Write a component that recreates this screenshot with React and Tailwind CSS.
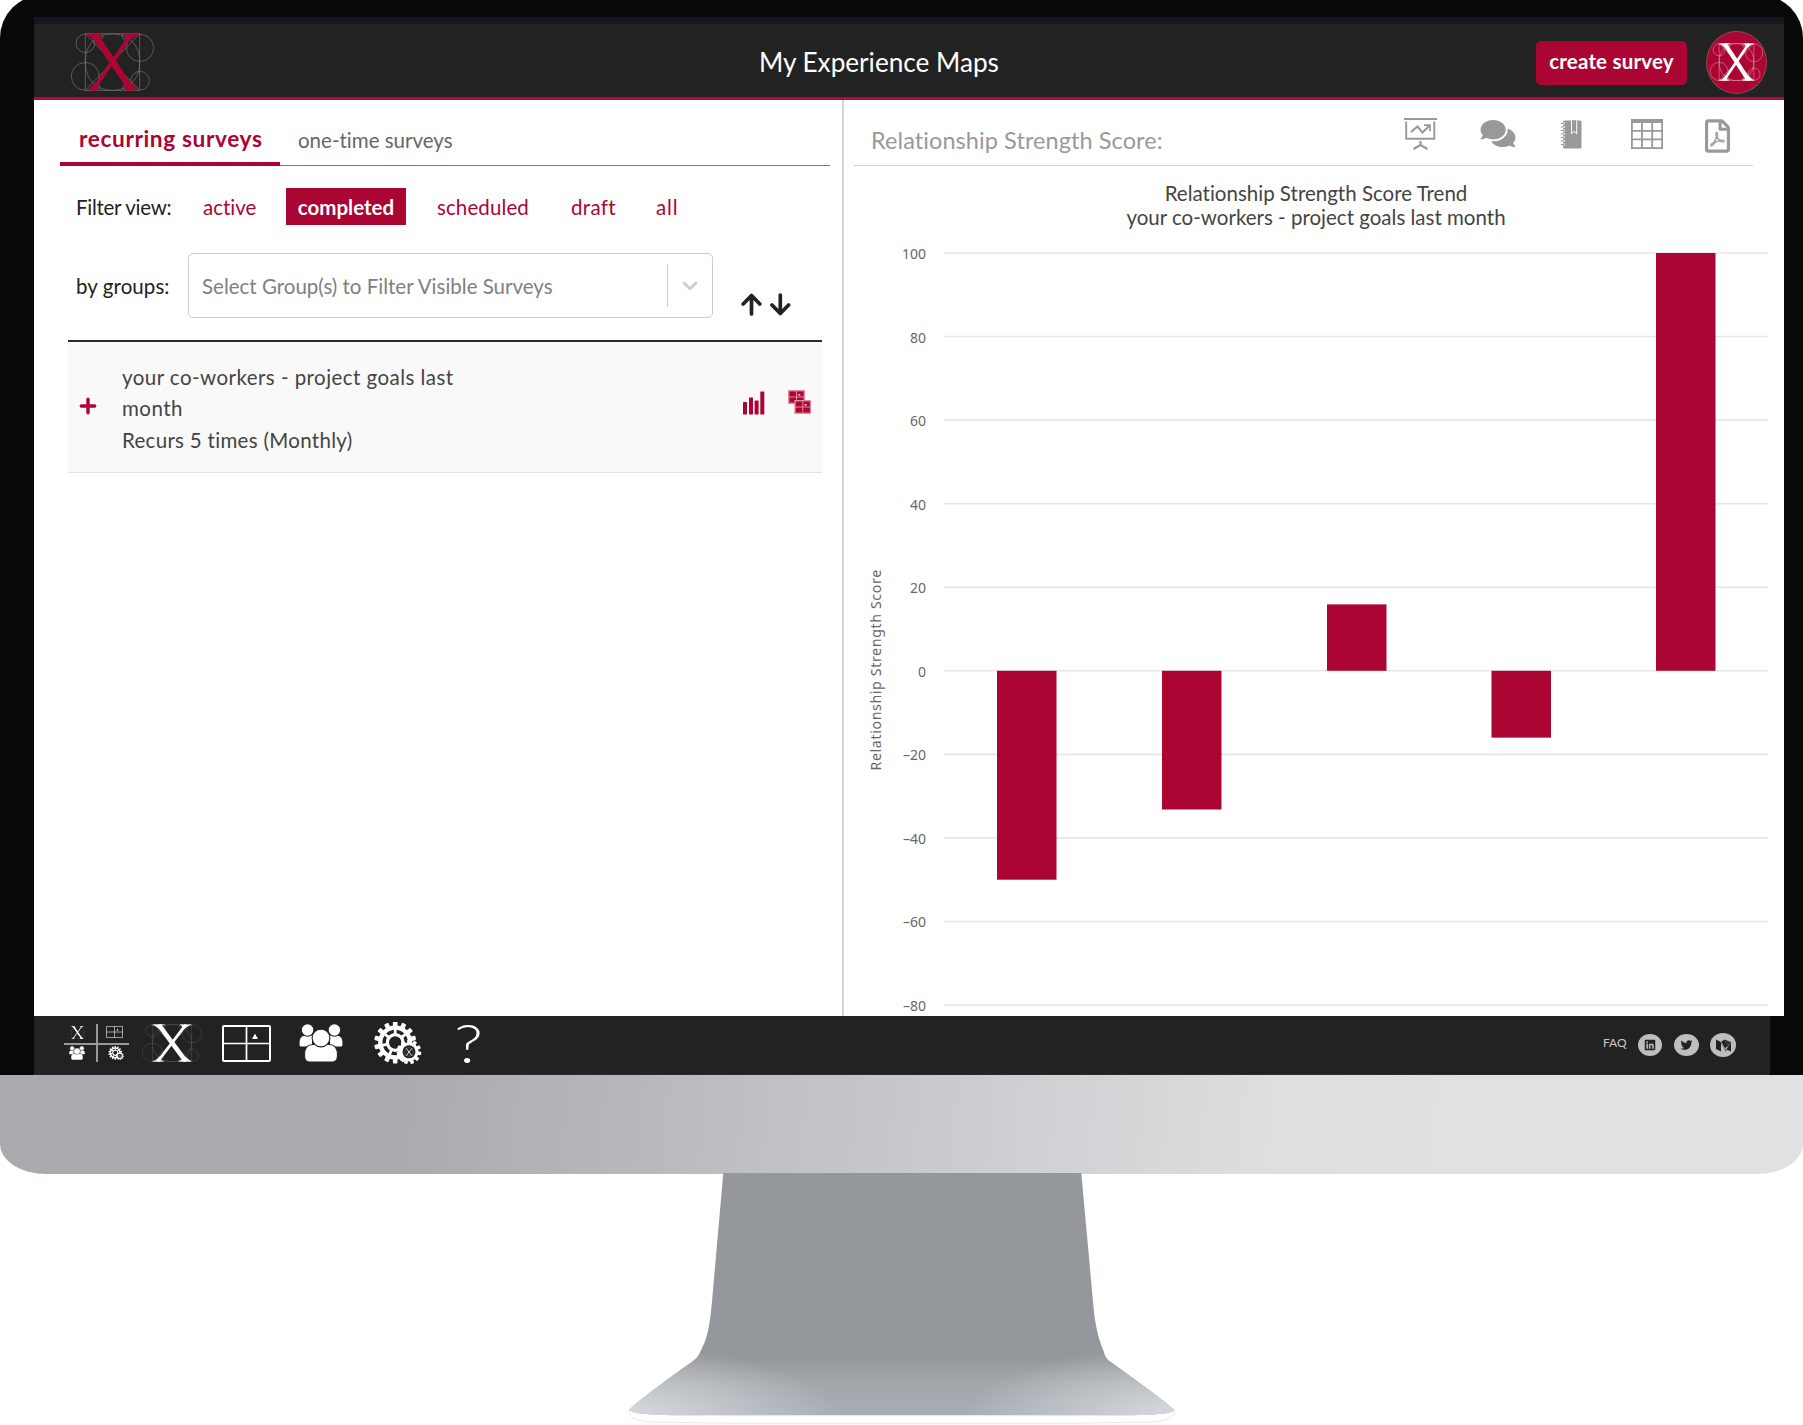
import React from "react";
import { FaComments, FaTwitter, FaLinkedin, FaRegFilePdf } from "react-icons/fa";

/* Constructed brand mark: guide circles, frame and two crossing strokes */
function XLogo({ className, guide = "#8a8a8a", fill = "#ffffff", line = 2 }) {
  return (
    <svg className={className} viewBox="34 38 249 175" preserveAspectRatio="none">
      <g fill="none" stroke={guide} strokeWidth={line}>
        <circle cx="77" cy="69" r="28" />
        <circle cx="241" cy="83" r="41" />
        <circle cx="77" cy="169" r="42" />
        <circle cx="241" cy="182" r="28" />
        <path d="M77 40H240V211H77Z" />
        <path d="M158 41C205 41 240 70 240 126C240 180 205 211 158 211C112 211 77 180 77 126C77 70 112 41 158 41Z" />
        <path d="M77 40L240 211M240 40L77 211" />
        <circle cx="122" cy="49" r="8" />
        <circle cx="195" cy="49" r="8" />
        <circle cx="112" cy="202" r="8" />
        <circle cx="198" cy="202" r="8" />
      </g>
      <g stroke={fill} fill="none">
        <path d="M103 41L216 210" strokeWidth="20" />
        <path d="M216 41L100 210" strokeWidth="12" />
        <path d="M79 42H128M192 42H238M79 209H124M186 209H238" strokeWidth="4" />
      </g>
      <g fill={fill}>
        <path d="M82 42H104V60Z" />
        <path d="M196 43H232L208 62Z" />
        <path d="M86 209L108 186L116 209Z" />
        <path d="M190 209L206 196L216 190L236 210Z" />
      </g>
    </svg>
  );
}

function GridMap({ className }) {
  return (
    <svg className={className} viewBox="0 0 49 37" fill="none" stroke="#fff" preserveAspectRatio="none">
      <rect x="1" y="1" width="47" height="35" rx="1" strokeWidth="2" />
      <path d="M24.5 1V36M1 18.5H48" strokeWidth="1.7" />
      <path d="M30.500 14V12.300L32 11V9.500H34V11L35.500 12.300V14Z" fill="#fff" stroke="none" />
    </svg>
  );
}

function People({ className }) {
  return (
    <svg className={className} viewBox="0 0 44 38" fill="#fff" stroke="#222" strokeWidth="1.1">
      <path d="M.6 18.500C.6 14 3 11.500 7 11.500H13V22.500H1.800C.8 22.500.6 21.500.6 20.500Z" stroke="none" />
      <path d="M43.400 18.500C43.400 14 41 11.500 37 11.500H31V22.500H42.200C43.200 22.500 43.400 21.500 43.400 20.500Z" stroke="none" />
      <circle cx="8.600" cy="6" r="6.300" />
      <circle cx="35.400" cy="6" r="6.300" />
      <path d="M5.500 31C5.500 24 8 20.500 14 20.500H30C36 20.500 38.500 24 38.500 31C38.500 36 37 38 33.500 38H10.500C7 38 5.500 36 5.500 31Z" />
      <circle cx="22" cy="14" r="8.900" />
    </svg>
  );
}

const toothAngles = (n) => Array.from({ length: n }, (_, i) => (360 / n) * i);

function Gears({ className }) {
  return (
    <svg className={className} viewBox="0 0 49 42">
      <g fill="#fff">
        {toothAngles(14).map((a) => (
          <rect key={a} x="19.900" y="-.5" width="4.600" height="6" rx="1" transform={`rotate(${a} 22.200 20.500)`} />
        ))}
      </g>
      <circle cx="22.200" cy="20.500" r="14.900" fill="none" stroke="#fff" strokeWidth="4.400" />
      <circle cx="22.200" cy="20.500" r="7.800" fill="none" stroke="#fff" strokeWidth="3.200" />
      <g stroke="#fff" strokeWidth="2.800">
        {toothAngles(7).map((a) => (
          <path key={a} d="M22.200 13V6" transform={`rotate(${a} 22.200 20.500)`} />
        ))}
      </g>
      <g fill="#fff">
        {toothAngles(11).map((a) => (
          <rect key={a} x="34.200" y="17.500" width="3.600" height="5" rx=".8" transform={`rotate(${a} 36 29.800)`} />
        ))}
        <circle cx="36" cy="29.800" r="9.600" />
      </g>
      <circle cx="36" cy="29.800" r="6.500" fill="#222" />
      <path d="M33 26L39 34M39 26L33 34" stroke="#ddd" strokeWidth="1" />
      <circle cx="36" cy="29.800" r="4.300" fill="none" stroke="#777" strokeWidth=".5" />
    </svg>
  );
}

function Presentation() {
  return (
    <svg className="mt-[3px] h-[32px] w-[33px]" viewBox="0 0 33 32" fill="none" stroke="#999">
      <path d="M0 1H33" strokeWidth="2" />
      <path d="M2.200 3.500V20.800H30.300V3.500" strokeWidth="1.900" />
      <path d="M7 14L13.500 8.500L18.500 14.500L25 8" strokeWidth="2" />
      <path d="M20 7.200H26V13.200" strokeWidth="1.700" />
      <path d="M16.500 23V27M9.500 31L16.500 27L23.500 31" strokeWidth="2.200" />
    </svg>
  );
}

function Notebook() {
  return (
    <svg className="h-[29px] w-[22px]" viewBox="0 0 22 29">
      <rect x="3" y=".5" width="18.500" height="28" rx="1.500" fill="#999" />
      <path d="M11.500 .5V13.800L14.100 11.300L16.700 13.800V.5" fill="#999" stroke="#fff" strokeWidth="1" />
      {[3.5, 7, 10.5, 14, 17.5, 21, 24.5].map((y) => (
        <g key={y}>
          <path d={`M2.500 ${y}H4.200`} stroke="#fff" strokeWidth="2" strokeLinecap="round" />
          <path d={`M1.300 ${y}H4`} stroke="#999" strokeWidth="1.200" strokeLinecap="round" />
        </g>
      ))}
    </svg>
  );
}

function TableIcon() {
  return (
    <svg className="h-[30px] w-[32px]" viewBox="0 0 32 30" fill="none" stroke="#999">
      <rect x=".9" y=".9" width="30.200" height="28.200" strokeWidth="1.800" />
      <path d="M0 2H32" strokeWidth="4" />
      <path d="M11 3V29M21.200 3V29" strokeWidth="1.800" />
      <path d="M1 11.800H31M1 20.300H31" strokeWidth="1.800" />
    </svg>
  );
}

function MapPair() {
  const tile = (x, y) => (
    <g key={x} transform={`translate(${x} ${y})`}>
      <rect x=".7" y=".7" width="15.600" height="12.600" fill="#ab0533" stroke="#e08ca4" strokeWidth="1.400" />
      <path d="M8.500 1V13M1 7H16" stroke="#e08ca4" strokeWidth="1" />
      <rect x="10.300" y="4" width="2" height="1.600" fill="#f3ccd6" />
    </g>
  );
  return (
    <svg className="h-[24px] w-[23px]" viewBox="0 0 23 24">
      {tile(0, 0)}
      {tile(6.3, 10)}
    </svg>
  );
}

function FoldedMark() {
  return (
    <svg className="h-[13px] w-[17px]" viewBox="0 0 17 13">
      <path d="M1 .5L6 3V12.500L1 10Z" fill="#222" />
      <path d="M6 3L9.500 .5L12.500 7L10 9.500Z" fill="#222" />
      <path d="M6 3L11 12L16 3" fill="none" stroke="#777" strokeWidth="1.200" />
      <path d="M16 3.500V12.500L11.500 10.500Z" fill="#222" />
      <path d="M9.500 .5L16 3L12.500 8Z" fill="#333" />
    </svg>
  );
}

function Header() {
  return (
    <header className="flex h-[76px] shrink-0 items-center border-b-[3px] border-[#b10c39] bg-[#222222] pr-[17px] pl-[37px]">
      <XLogo className="mt-[3px] h-[58px] w-[83px]" guide="#777777" fill="#ab0533" />
      <h1 className="mt-[4px] ml-[605px] text-[26.2px] leading-none tracking-[-0.02px] text-white">My Experience Maps</h1>
      <button className="mt-[4px] ml-auto h-[44px] w-[151px] rounded-[5px] bg-[#ab0533] pb-[2px] text-[20.5px] leading-none font-bold tracking-[0.2px] text-white">
        create survey
      </button>
      <div className="mt-[3px] ml-[19px] flex h-[63px] w-[61px] items-center justify-center rounded-[50%] border border-[#8b4a5c] bg-[#ab0533]">
        <XLogo className="h-[38px] w-[53px]" guide="#e0a0b2" line={2.5} />
      </div>
    </header>
  );
}

function SurveyPanel() {
  return (
    <section className="flex w-[810px] shrink-0 flex-col border-r-2 border-[#d4d4d4] text-[20.5px]">
      <nav className="ml-[26px] flex h-[66px] w-[770px]">
        <div className="flex w-[220px] items-center border-b-4 border-[#ab0533] pt-[17px] pl-[19px] text-[22.7px] leading-none font-bold tracking-[0.6px] text-[#ab0533]">
          recurring surveys
        </div>
        <div className="flex flex-1 items-center border-b-[1.500px] border-[#777] pt-[16px] pl-[18px] leading-none text-[#666]">one-time surveys</div>
      </nav>
      <div className="mt-[22px] flex h-[37px] items-center pl-[42px] leading-none text-[#ab0533]">
        <span className="mt-px w-[127px] tracking-[-0.28px] text-[#222]">Filter view:</span>
        <span className="mt-px w-[83px]">active</span>
        <span className="flex h-[37px] w-[120px] items-center justify-center bg-[#ab0533] pt-px font-bold text-white">completed</span>
        <span className="mt-px ml-[31px] w-[134px] tracking-[0.1px]">scheduled</span>
        <span className="mt-px w-[85px] tracking-[0.3px]">draft</span>
        <span className="mt-px tracking-[0.9px]">all</span>
      </div>
      <div className="mt-[28px] flex h-[65px] items-center pl-[42px] leading-none">
        <span className="mt-px w-[112px] tracking-[0.08px] text-[#222]">by groups:</span>
        <div className="flex h-[65px] w-[525px] items-center rounded-[5px] border-[1.500px] border-[#ccc] pl-[13px] text-[#808080]">
          <span className="mt-px flex-1">Select Group(s) to Filter Visible Surveys</span>
          <span className="h-[43px] w-px bg-[#ccc]" />
          <span className="flex w-[44px] justify-center">
            <svg className="h-[10px] w-[16px]" viewBox="0 0 16 10" fill="none" stroke="#ccc" strokeWidth="2.800" strokeLinecap="round" strokeLinejoin="round">
              <path d="M2 2L8 7.800L14 2" />
            </svg>
          </span>
        </div>
        <svg className="mb-[2px] ml-[28px] h-[23px] w-[50px] self-end" viewBox="0 0 50 23" fill="none" stroke="#222" strokeWidth="3.700" strokeLinecap="round" strokeLinejoin="round">
          <path d="M10.500 21V3M2.200 11L10.500 2.500L18.800 11" />
          <path d="M39.300 2V20M31 12L39.300 20.500L47.600 12" />
        </svg>
      </div>
      <div className="mt-[22px] ml-[34px] flex h-[133px] w-[754px] border-t-2 border-b border-t-[#2a2a2a] border-b-[#e2e2e2] bg-[#f9f9f9] text-[#444]">
        <svg className="mt-[55px] ml-[11px] h-[18px] w-[18px]" viewBox="0 0 18 18" stroke="#ab0533" strokeWidth="3.400" strokeLinecap="round">
          <path d="M9 2.300V15.700M2.300 9H15.700" />
        </svg>
        <div className="mt-[20px] ml-[25px] w-[350px] leading-[31.4px] tracking-[0.45px]">
          <p>your co-workers - project goals last month</p>
          <p className="tracking-[0.3px]">Recurs 5 times (Monthly)</p>
        </div>
        <svg className="mt-[49px] ml-auto h-[24px] w-[22px]" viewBox="0 0 22 24" fill="#ab0533">
          <rect x="0" y="11" width="4" height="12.500" rx=".6" />
          <rect x="6" y="6.500" width="4" height="17" rx=".6" />
          <rect x="11.600" y="9.500" width="4" height="14" rx=".6" />
          <rect x="17.300" y=".5" width="4" height="23" rx=".6" />
        </svg>
        <span className="mt-[48px] mr-[11px] ml-[23px]">
          <MapPair />
        </span>
      </div>
    </section>
  );
}

const TICKS = [100, 80, 60, 40, 20, 0, -20, -40, -60, -80];
const BARS = [
  { x: 997, value: -50 },
  { x: 1162, value: -33.2 },
  { x: 1327, value: 15.9 },
  { x: 1491.5, value: -16 },
  { x: 1656, value: 100 },
];
const yFor = (v) => 670.8 - v * 4.178;

function TrendChart() {
  return (
    <svg className="h-[850px] w-[940px]" viewBox="844 166 940 850" fontFamily="Lato, sans-serif">
      <g fontSize="20.5" fill="#444" textAnchor="middle">
        <text x="1316" y="200.500">Relationship Strength Score Trend</text>
        <text x="1316" y="224.500">your co-workers - project goals last month</text>
      </g>
      <g fontFamily="Noto Sans, sans-serif" fontSize="14" fill="#666">
        {TICKS.map((t) => (
          <g key={t}>
            <path d={`M944 ${yFor(t)}H1768`} stroke="#e6e6e6" strokeWidth="1.600" />
            <text x="926" y={yFor(t) + 6} textAnchor="end">
              {t < 0 ? `\u2013${-t}` : t}
            </text>
          </g>
        ))}
        <text transform="translate(881 770.500) rotate(-90)" fontSize="14.2" letterSpacing=".62">
          Relationship Strength Score
        </text>
      </g>
      {BARS.map((b) => (
        <rect
          key={b.x}
          x={b.x}
          y={Math.min(yFor(b.value), yFor(0))}
          width="59.500"
          height={Math.abs(b.value) * 4.178}
          fill="#ab0533"
        />
      ))}
    </svg>
  );
}

function ScorePanel() {
  return (
    <section className="flex w-[940px] flex-col">
      <div className="mr-[31px] ml-[10px] flex h-[66px] items-center border-b-[1.500px] border-[#d0d0d0] pr-[23px] pl-[17px] text-[#999]">
        <h2 className="mt-[16px] flex-1 text-[23.500px] leading-none tracking-[0.08px]">Relationship Strength Score:</h2>
        <Presentation />
        <FaComments className="mt-[2px] ml-[43px] h-[31px] w-[36px]" />
        <span className="mt-[3px] ml-[44px]">
          <Notebook />
        </span>
        <span className="mt-[3px] ml-[49px]">
          <TableIcon />
        </span>
        <FaRegFilePdf className="mt-[6px] ml-[42px] h-[34px] w-[25px]" />
      </div>
      <TrendChart />
    </section>
  );
}

function Social({ children, className }) {
  return <span className={`flex items-center justify-center rounded-[50%] bg-[#bebebe] text-[#222] ${className}`}>{children}</span>;
}

function Footer() {
  return (
    <footer className="flex h-[59px] w-[1736px] shrink-0 items-center border-b border-[#2e2a2a] bg-[#222222] pl-[30px]">
      <div className="-mt-[4px] grid h-[38px] w-[65px] grid-cols-2">
        <div className="flex items-center justify-center border-r border-b border-[#999] pr-[4px] pb-[2px]">
          <XLogo className="h-[13px] w-[19px]" guide="#666" line={2} />
        </div>
        <div className="flex items-center justify-center border-b border-l border-[#999] pb-[2px] pl-[3px]">
          <GridMap className="h-[12px] w-[17px]" />
        </div>
        <div className="flex items-center justify-center border-t border-r border-[#999] pr-[5px]">
          <People className="h-[14px] w-[16px]" />
        </div>
        <div className="flex items-center justify-center border-t border-l border-[#999] pl-[5px]">
          <Gears className="h-[14px] w-[16px]" />
        </div>
      </div>
      <XLogo className="-mt-[5px] ml-[13px] h-[38px] w-[60px]" guide="#5c5c5c" />
      <GridMap className="-mt-[4px] ml-[20px] h-[37px] w-[49px]" />
      <People className="-mt-[5px] ml-[28px] h-[38px] w-[44px]" />
      <Gears className="-mt-[4px] ml-[30px] h-[42px] w-[49px]" />
      <span className="-mt-[6px] ml-[36px] w-[30px] scale-x-125 text-[53px] leading-none font-light text-white">?</span>
      <span className="-mt-[4px] ml-auto w-[35px] text-[12px] leading-none text-[#c8c8c8]">FAQ</span>
      <Social className="h-[22px] w-[24px]">
        <FaLinkedin className="h-[12px] w-[12px]" />
      </Social>
      <Social className="ml-[12px] h-[22px] w-[25px]">
        <FaTwitter className="h-[12px] w-[13px]" />
      </Social>
      <Social className="mr-[34px] ml-[11px] h-[24px] w-[26px]">
        <FoldedMark />
      </Social>
    </footer>
  );
}

function Stand() {
  return (
    <svg className="mx-auto -mt-px h-[251px] w-[565px]" viewBox="619 1174 565 251">
      <defs>
        <linearGradient id="neck" x1="0" y1="0" x2="0" y2="1">
          <stop offset="0" stopColor="#94979b" />
          <stop offset="0.76" stopColor="#94979b" />
          <stop offset="0.88" stopColor="#a4a7ab" />
          <stop offset="1" stopColor="#a9adb6" />
        </linearGradient>
        <radialGradient id="glowL" gradientUnits="userSpaceOnUse" cx="628" cy="1416" r="210" gradientTransform="translate(628 1416) scale(1 .32) translate(-628 -1416)">
          <stop offset="0" stopColor="#d6dade" />
          <stop offset="1" stopColor="#d6dade" stopOpacity="0" />
        </radialGradient>
        <radialGradient id="glowR" gradientUnits="userSpaceOnUse" cx="1175" cy="1416" r="210" gradientTransform="translate(1175 1416) scale(1 .32) translate(-1175 -1416)">
          <stop offset="0" stopColor="#d6dade" />
          <stop offset="1" stopColor="#d6dade" stopOpacity="0" />
        </radialGradient>
        <path
          id="foot"
          d="M723.300 1174H1081.300L1093.500 1308C1095.500 1330 1100 1344 1104 1353C1105 1358 1107 1360 1111 1363C1125 1373 1160 1398 1174.500 1411C1174 1414 1160 1416.300 1120 1416.300H684C644 1416.300 632 1414 629 1411C641 1399 680 1371 693 1362C697 1359 699 1356 702 1349C708 1338 710 1322 711.500 1308Z"
        />
      </defs>
      <path d="M629 1411C629.500 1419 635 1422 652 1423L730 1424.300H1073L1150 1423C1168 1422 1174 1419 1174.500 1411" fill="#fff" stroke="#e2e2e2" strokeWidth=".8" />
      <use href="#foot" fill="url(#neck)" />
      <use href="#foot" fill="url(#glowL)" />
      <use href="#foot" fill="url(#glowR)" />
    </svg>
  );
}

export default function App() {
  return (
    <div className="flex h-[1425px] w-[1803px] flex-col overflow-hidden bg-white font-['Lato',sans-serif] [font-variant-ligatures:none]">
      <div className="-mt-[5px] flex h-[1080px] shrink-0 flex-col rounded-t-[43px] bg-[#080808] pt-[22px] pl-[34px]">
        <div className="flex h-[1058px] w-[1750px] flex-col">
          <div className="h-[7px] shrink-0 bg-[#151820]" />
          <Header />
          <main className="flex h-[916px] shrink-0 bg-white">
            <SurveyPanel />
            <ScorePanel />
          </main>
          <Footer />
        </div>
      </div>
      <div className="h-[99px] shrink-0 rounded-b-[46px_30px] bg-[linear-gradient(96deg,#a9aaae_0%,#a9aaae_22%,#c5c6ca_48%,#dddedf_70%,#e0e1e3_82%,#e0e1e3_100%)]" />
      <Stand />
    </div>
  );
}
